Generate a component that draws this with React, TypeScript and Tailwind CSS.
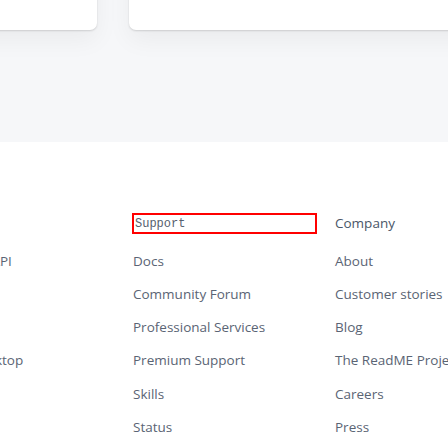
const support = [
  "Docs",
  "Community Forum",
  "Professional Services",
  "Premium Support",
  "Skills",
  "Status",
];

const company = [
  "About",
  "Customer stories",
  "Blog",
  "The ReadME Project",
  "Careers",
  "Press",
];

const developers = ["GraphQL API", "CLI", "Mobile", "Cloud Desktop", "Apps", "Events"];

function Column({ title, items, boxed = false }: { title: string; items: string[]; boxed?: boolean }) {
  return (
    <div className="w-[202px] shrink-0">
      {boxed ? (
        <div className="h-[21px] w-[185px] -ml-[1px] border-2 border-[#ff0000] flex items-center pl-[1px] font-['Liberation_Mono',monospace] text-[12px] text-[#56606e]">
          {title}
        </div>
      ) : (
        <div className="h-[21px] flex items-center text-[13.5px] text-[#4a5668]">{title}</div>
      )}
      <ul className="mt-[10px] flex flex-col">
        {items.map((item) => (
          <li key={item} className="h-[33.3px] flex items-center text-[13.5px] text-[#5a6474] whitespace-nowrap">
            {item}
          </li>
        ))}
      </ul>
    </div>
  );
}

export default function App() {
  return (
    <div className="w-[448px] h-[448px] overflow-hidden bg-white font-['Open_Sans',sans-serif]">
      {/* Header band with cards */}
      <div className="h-[142px] bg-[#f6f7f9] relative overflow-hidden">
        <div className="flex gap-[32px] -ml-[40px] -mt-[200px]">
          <div className="w-[137px] h-[230px] shrink-0 bg-white rounded-b-[7px] shadow-[0_1px_2px_rgba(0,0,0,0.14),0_10px_24px_rgba(0,0,0,0.05)]" />
          <div className="w-[400px] h-[230px] shrink-0 bg-white rounded-b-[7px] shadow-[0_1px_2px_rgba(0,0,0,0.14),0_10px_24px_rgba(0,0,0,0.05)]" />
        </div>
      </div>

      {/* Footer links */}
      <div className="flex -ml-[69px] pt-[71px]">
        <Column title="Build" items={developers} />
        <Column title="Support" items={support} boxed />
        <Column title="Company" items={company} />
      </div>
    </div>
  );
}
